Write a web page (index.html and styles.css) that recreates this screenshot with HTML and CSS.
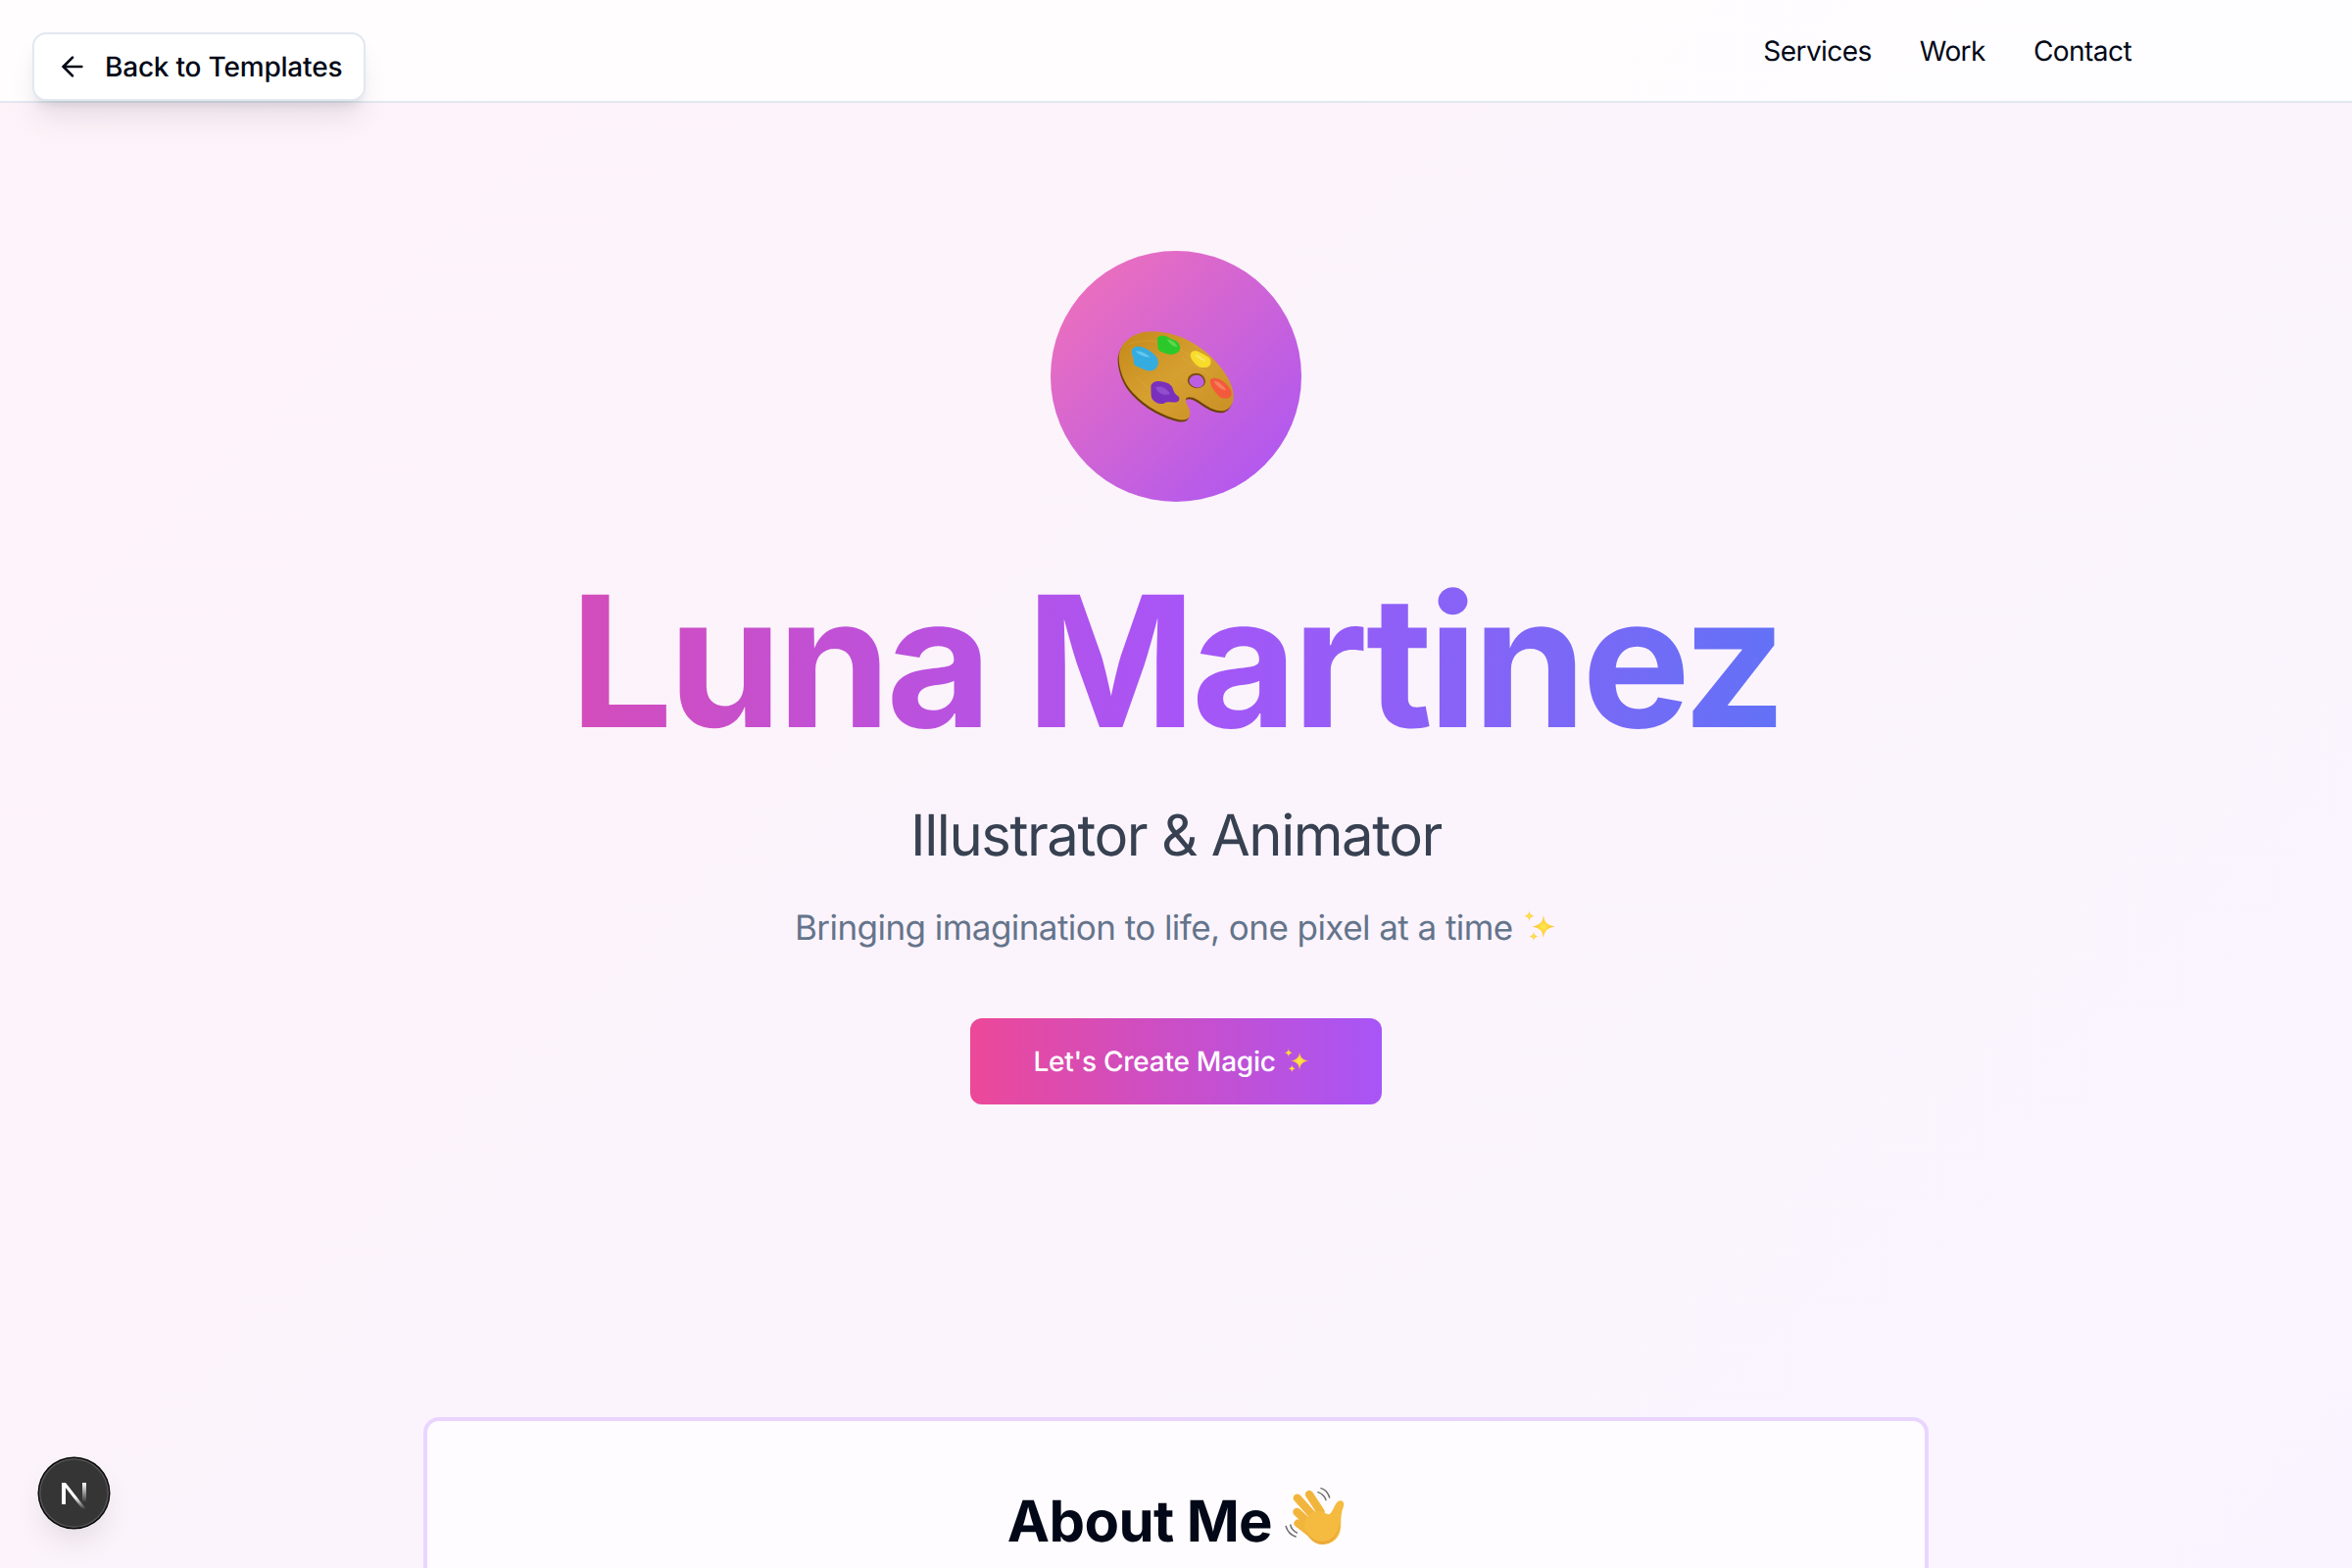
FILE: index.html
```html
<!DOCTYPE html>
<html lang="en">
<head>
<meta charset="utf-8">
<title>Luna Martinez</title>
<link rel="stylesheet" href="styles.css">
</head>
<body>
<svg class="defs" aria-hidden="true">
  <defs>
    <radialGradient id="sparkFill" cx="50%" cy="50%" r="50%">
      <stop offset="0" stop-color="#ffe94d"/>
      <stop offset="1" stop-color="#fdb92e"/>
    </radialGradient>
    <symbol id="sparkles" viewBox="0 0 36 36">
      <path fill="url(#sparkFill)" d="M22 5.500c.6 6.600 2.600 10.100 11.500 12-8.900 1.900-10.900 5.400-11.500 12.500-.6-7.100-2.600-10.600-11.500-12.500 8.900-1.900 10.900-5.400 11.500-12z"/>
      <path fill="url(#sparkFill)" d="M7.500 1c.3 3.300 1.300 4.800 5 5.700-3.700.9-4.700 2.400-5 5.800-.3-3.400-1.300-4.900-5-5.800 3.700-.9 4.700-2.400 5-5.700z"/>
      <path fill="url(#sparkFill)" d="M12 22.500c.3 3 1.200 4.200 4.500 5-3.300.8-4.200 2-4.500 5-.3-3-1.200-4.200-4.500-5 3.300-.8 4.200-2 4.500-5z"/>
    </symbol>
  </defs>
</svg>

<a class="back" href="#">
  <svg class="back-icon" viewBox="0 0 24 24" fill="none" stroke="currentColor" stroke-width="2" stroke-linecap="round" stroke-linejoin="round"><path d="m12 19-7-7 7-7"/><path d="M19 12H5"/></svg>
  <span>Back to Templates</span>
</a>

<header class="topbar">
  <nav class="links">
    <a href="#">Services</a>
    <a href="#">Work</a>
    <a href="#">Contact</a>
  </nav>
</header>

<main class="page">
  <section class="hero">
    <div class="avatar">
      <svg class="palette" viewBox="300 295 365 290">
        <defs>
          <linearGradient id="wood" x1="0" y1="0" x2="1" y2="1">
            <stop offset="0" stop-color="#c4891a"/>
            <stop offset=".5" stop-color="#d6a030"/>
            <stop offset="1" stop-color="#c88e24"/>
          </linearGradient>
        </defs>
        <path fill="#6b4209" transform="translate(-3 6)" d="M308 384C308 340 348 302 408 302C470 302 530 326 580 370C622 408 658 458 658 498C660 526 640 546 618 544C590 542 568 522 544 508C532 500 510 498 512 512C515 530 530 540 524 560C520 574 500 574 480 568C424 552 372 516 340 476C322 452 308 414 308 384Z"/>
        <path fill="url(#wood)" d="M308 384C308 340 348 302 408 302C470 302 530 326 580 370C622 408 658 458 658 498C660 526 640 546 618 544C590 542 568 522 544 508C532 500 510 498 512 512C515 530 530 540 524 560C520 574 500 574 480 568C424 552 372 516 340 476C322 452 308 414 308 384Z"/>
        <path fill="none" stroke="#e6bd5c" stroke-width="1.500" opacity=".5" d="M340 340c50-20 130-10 190 40M360 440c40 40 80 70 120 85M500 380c40 30 70 40 90 60"/>
        <path fill="#7a4e0c" d="M545 429c-16 0-27 10-27 22s14 24 29 24 26-10 25-22-12-24-27-24z"/>
        <path fill="#bb5ee2" d="M546 435c-13 0-23 8-23 18s12 20 25 20 21-8 20-18-9-20-22-20z"/>
        <path fill="#35ace0" d="M348 358c6-14 24-14 42-4 16 8 36 22 38 38 2 18-10 30-26 30-12 0-26-8-40-14-14-8-6-22-12-30-2-6-4-12-2-20z"/>
        <path fill="#86d8f5" opacity=".6" d="M360 362c14-4 32 8 44 18-14 0-34-6-44-18z"/>
        <path fill="#2cc82a" d="M425 326c0-10 14-14 26-10 8 3 12 8 22 10 14 3 22 14 22 26 0 12-14 20-28 20-14 0-22-6-30-8-8-4-12-12-10-20 0-6-2-12-2-18z"/>
        <path fill="#83e36c" opacity=".55" d="M455 325c14 3 28 10 32 24-12 0-26-10-32-24z"/>
        <path fill="#f7dc2a" d="M527 371c2-10 14-12 24-8 12 6 22 12 32 18 8 8 8 22-2 28-10 4-24 4-32-2-10-8-24-22-22-36z"/>
        <path fill="#fbee8f" opacity=".6" d="M538 370c12 2 28 14 38 24-14-2-30-12-38-24z"/>
        <path fill="#7b30bd" d="M406 470c0-12 14-18 30-16 14 2 26 4 34 16 6 10 4 20 20 30 6 8 2 18-10 18-14 0-24-4-36 4-14 2-30-6-36-18-2-10-2-22-2-34z"/>
        <path fill="#a268de" opacity=".55" d="M420 472c16-6 34 2 44 20-14 6-36 2-44-20z"/>
        <path fill="#f25a3b" d="M587 454c0-10 12-12 24-8 16 6 30 18 38 34 6 12 4 24-10 26-14 2-24-4-32-14-8-10-20-24-20-38z"/>
        <path fill="#fb9a7c" opacity=".6" d="M598 452c14 2 30 14 38 30-14-2-32-14-38-30z"/>
      </svg>
    </div>
    <h1 class="name">Luna Martinez</h1>
    <p class="role">Illustrator &amp; Animator</p>
    <p class="tagline">Bringing imagination to life, one pixel at a time <svg class="spark-lg"><use href="#sparkles"/></svg></p>
    <a class="cta" href="#">Let's Create Magic <svg class="spark-sm"><use href="#sparkles"/></svg></a>
  </section>

  <section class="about">
    <h2 class="about-title">About Me <svg class="wave" viewBox="995 272 183 178">
      <g fill="none" stroke="#6b6b6b" stroke-width="4.500" stroke-linecap="round">
        <path d="M1097 289c12 4 20 12 24 24"/>
        <path d="M1106 277c12 4 22 14 26 28"/>
        <path d="M1012 390c2 10 8 18 20 24"/>
        <path d="M998 394c4 14 14 26 30 32"/>
      </g>
      <g fill="none" stroke="#f2b53c" stroke-linecap="round">
        <path stroke-width="25" d="M1082 362 1033 307"/>
        <path stroke-width="25" d="M1105 350 1070 296"/>
        <path stroke-width="25" d="M1072 387 1032 350"/>
        <path stroke-width="24" d="M1070 412 1035 385"/>
      </g>
      <path fill="#f4bb40" d="M1055 392c0-20 20-50 50-44 12 2 20 12 28 8 10-6 14-32 28-40 12-4 18 6 14 18-6 14-8 32-8 56 0 42-28 60-56 60-26 0-56-30-56-58z"/>
      <path fill="#e89f2e" opacity=".65" d="M1056 404c16 32 56 50 84 26 14-12 22-30 24-52 2 36-20 72-56 72-22 0-44-20-52-46z"/>
    </svg></h2>
  </section>
</main>

<div class="devbadge">
  <svg viewBox="0 0 75 75">
    <defs>
      <linearGradient id="nFade" x1="0" y1="0" x2="0" y2="1">
        <stop offset="0" stop-color="#fff"/>
        <stop offset=".55" stop-color="#fff"/>
        <stop offset="1" stop-color="#fff" stop-opacity="0"/>
      </linearGradient>
      <linearGradient id="nFade2" x1="0" y1="0" x2="0" y2="1">
        <stop offset="0" stop-color="#fff"/>
        <stop offset="1" stop-color="#fff" stop-opacity="0"/>
      </linearGradient>
    </defs>
    <circle cx="37.500" cy="37.500" r="37" fill="#0b0b0b"/>
    <circle cx="37.500" cy="37.500" r="35.500" fill="#555"/>
    <circle cx="37.500" cy="37.500" r="34" fill="#363535"/>
    <path fill="#fff" d="M25 27h4v22h-4z"/>
    <path fill="url(#nFade)" d="M25 27h4l21 27h-4z"/>
    <path fill="url(#nFade2)" d="M46 27h4v20h-4z"/>
  </svg>
</div>
</body>
</html>
```

FILE: styles.css
```css
* { box-sizing: border-box; }
html, body { margin: 0; height: 1600px; overflow: hidden; }
body {
  font-family: Inter, "Liberation Sans", sans-serif;
  text-rendering: geometricPrecision;
  color: #020817;
  background: linear-gradient(135deg, #fdf2f8 0%, #faf5ff 50%, #eef2ff 100%) 0 0 / 2400px 5000px no-repeat;
}
a { color: inherit; text-decoration: none; }
.defs { position: absolute; width: 0; height: 0; }

.back {
  position: absolute;
  left: 33px;
  top: 33px;
  width: 340px;
  height: 70px;
  z-index: 5;
  display: flex;
  align-items: center;
  gap: 17px;
  padding-left: 23px;
  background: #fff;
  border: 2px solid #e2e8f0;
  border-radius: 14px;
  font-size: 28px;
  font-weight: 500;
  letter-spacing: -.2px;
  box-shadow: 0 20px 30px -6px rgba(15, 23, 42, .10), 0 8px 12px -6px rgba(15, 23, 42, .12);
}
.back-icon { width: 32px; height: 32px; flex: none; }

.topbar {
  height: 105px;
  display: flex;
  justify-content: flex-end;
  padding: 0 225px 0 0;
  background: rgba(255, 255, 255, .8);
  border-bottom: 2px solid #e2e8f0;
}
.links {
  display: flex;
  gap: 49px;
  align-items: center;
  height: 104px;
  font-size: 28px;
  font-weight: 400;
  letter-spacing: -.55px;
}

.page { display: flex; flex-direction: column; align-items: center; }
.hero {
  width: 100%;
  display: flex;
  flex-direction: column;
  align-items: center;
  padding-top: 151px;
}
.avatar {
  width: 256px;
  height: 256px;
  border-radius: 50%;
  display: flex;
  align-items: center;
  justify-content: center;
  background: linear-gradient(135deg, #f472b6, #a855f7);
}
.palette { width: 122px; height: 97px; }
.name {
  width: 1920px;
  margin: 67px 0 0;
  font-size: 186px;
  line-height: 192px;
  font-weight: 700;
  letter-spacing: -.025em;
  text-align: center;
  color: transparent;
  background: linear-gradient(90deg, #ec4899, #a855f7, #3b82f6);
  -webkit-background-clip: text;
  background-clip: text;
}
.role {
  margin: 45px 0 0;
  font-size: 58px;
  line-height: 72px;
  letter-spacing: -1.45px;
  color: #374151;
}
.tagline {
  margin: 31px 0 0;
  font-size: 35px;
  line-height: 56px;
  letter-spacing: -.55px;
  color: #64748b;
}
.spark-lg { width: 36px; height: 36px; vertical-align: -5px; }
.cta {
  margin-top: 64px;
  width: 420px;
  height: 88px;
  display: flex;
  align-items: center;
  justify-content: center;
  gap: 7px;
  border-radius: 12px;
  font-size: 28px;
  font-weight: 500;
  letter-spacing: -.25px;
  color: #fff;
  background: linear-gradient(90deg, #ec4899, #a855f7);
}
.spark-sm { width: 28px; height: 28px; margin-right: 9px; }

.about {
  width: 1536px;
  height: 600px;
  margin-top: 319px;
  padding-top: 66px;
  flex: none;
  border: 4px solid #e9d5ff;
  border-radius: 16px;
  background: rgba(255, 255, 255, .7);
}
.about-title {
  margin: 0;
  font-size: 58px;
  line-height: 72px;
  font-weight: 700;
  letter-spacing: -.6px;
  text-align: center;
}
.wave { width: 61px; height: 59px; vertical-align: -3px; }

.devbadge {
  position: absolute;
  left: 38px;
  top: 1486px;
  width: 75px;
  height: 75px;
  border-radius: 50%;
  box-shadow: 0 16px 32px -8px rgba(0, 0, 0, .12);
}
.devbadge svg { display: block; width: 75px; height: 75px; }
```
